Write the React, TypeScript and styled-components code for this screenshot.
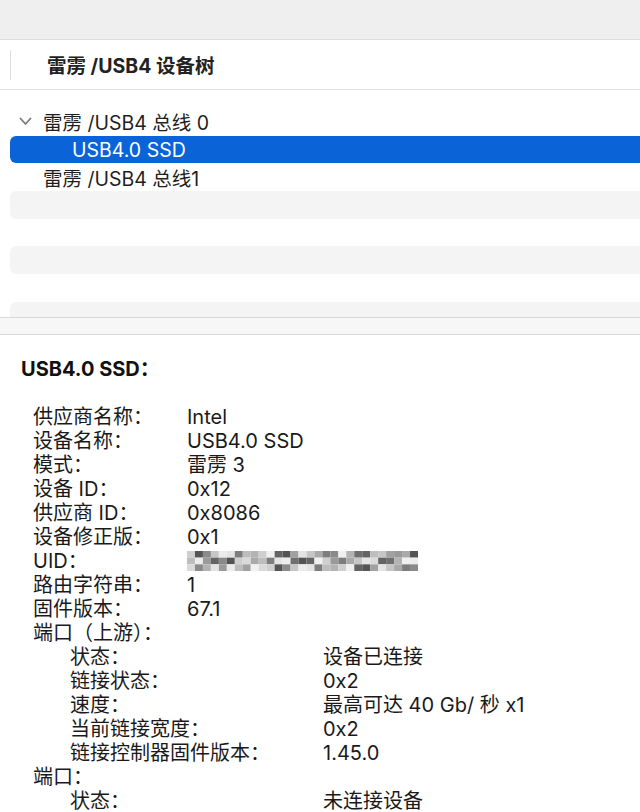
import React from 'react';
import styled, { createGlobalStyle } from 'styled-components';

const GlobalStyle = createGlobalStyle`
  html, body {
    margin: 0;
    padding: 0;
    background: #ffffff;
  }
  body {
    font-family: "Inter", "Noto Sans CJK SC", sans-serif;
    color: #1d1d1f;
    -webkit-font-smoothing: antialiased;
  }
`;

const Page = styled.div`
  width: 640px;
  height: 812px;
  overflow: hidden;
  display: flex;
  flex-direction: column;
`;

const Toolbar = styled.div`
  height: 39px;
  flex-shrink: 0;
  background: #efefef;
  border-bottom: 1px solid #dcdcdc;
`;

const ColumnHeader = styled.div`
  height: 49px;
  flex-shrink: 0;
  display: flex;
  align-items: center;
  border-bottom: 1px solid #e2e2e2;
`;

const HeaderTick = styled.div`
  width: 1px;
  height: 30px;
  margin-left: 10px;
  background: #dedede;
`;

const HeaderTitle = styled.div`
  margin-left: 36px;
  font-size: 19.5px;
  font-weight: 700;
  color: #222;
`;

const Tree = styled.div`
  height: 227px;
  flex-shrink: 0;
  overflow: hidden;
  padding: 18px 0 0 10px;
  box-sizing: border-box;
`;

const TreeRow = styled.div<{ $striped?: boolean; $selected?: boolean; $indent: number }>`
  height: 27.7px;
  display: flex;
  align-items: center;
  padding-left: ${(p) => p.$indent}px;
  border-radius: 6px 0 0 6px;
  font-size: 19.5px;
  color: ${(p) => (p.$selected ? '#ffffff' : '#1f1f1f')};
  background: ${(p) => (p.$selected ? '#0b63d8' : p.$striped ? '#f4f4f4' : 'transparent')};
  white-space: nowrap;
`;

const Chevron = styled.svg`
  width: 13px;
  height: 9px;
  margin-left: 9px;
  margin-right: 11px;
`;

const Splitter = styled.div`
  height: 16px;
  flex-shrink: 0;
  background: #f7f7f7;
  border-top: 1px solid #d9d9d9;
  border-bottom: 1px solid #d9d9d9;
`;

const Detail = styled.div`
  flex: 1;
  padding: 22px 0 0 21px;
`;

const DetailTitle = styled.div`
  font-size: 20px;
  font-weight: 700;
  line-height: 24px;
  margin-bottom: 24px;
  color: #111;
`;

const InfoList = styled.div`
  padding-left: 12px;
`;

const InfoRow = styled.div<{ $nested?: boolean }>`
  display: grid;
  grid-template-columns: ${(p) => (p.$nested ? '253px' : '154px')} 1fr;
  padding-left: ${(p) => (p.$nested ? 37 : 0)}px;
  height: 24px;
  line-height: 24px;
  font-size: 20px;
  color: #1a1a1a;
  white-space: nowrap;
`;

const Mosaic = styled.svg`
  display: block;
  margin-top: 2px;
`;

const mosaicShades = [
  '#cfcfcf', '#a9a9a9', '#8a8a8a', '#e4e4e4', '#6f6f6f', '#bdbdbd', '#f0f0f0', '#9a9a9a',
  '#545454', '#c6c6c6', '#dadada', '#7d7d7d', '#b3b3b3', '#ececec', '#646464', '#a1a1a1',
];

const BlurredUid: React.FC = () => {
  const cols = 29;
  const rows = 3;
  const cells = [];
  for (let r = 0; r < rows; r++) {
    for (let c = 0; c < cols; c++) {
      const shade = mosaicShades[(c * 7 + r * 5 + ((c * c) % 5)) % mosaicShades.length];
      cells.push(<rect key={`${r}-${c}`} x={c * 8} y={r * 7} width={8} height={7} fill={shade} />);
    }
  }
  return (
    <Mosaic width={231} height={20} viewBox="0 0 232 21" preserveAspectRatio="none">
      {cells}
    </Mosaic>
  );
};

type Info = { label: string; value?: string; nested?: boolean; blurred?: boolean };

const info: Info[] = [
  { label: '供应商名称：', value: 'Intel' },
  { label: '设备名称：', value: 'USB4.0 SSD' },
  { label: '模式：', value: '雷雳 3' },
  { label: '设备 ID：', value: '0x12' },
  { label: '供应商 ID：', value: '0x8086' },
  { label: '设备修正版：', value: '0x1' },
  { label: 'UID：', blurred: true },
  { label: '路由字符串：', value: '1' },
  { label: '固件版本：', value: '67.1' },
  { label: '端口（上游）：' },
  { label: '状态：', value: '设备已连接', nested: true },
  { label: '链接状态：', value: '0x2', nested: true },
  { label: '速度：', value: '最高可达 40 Gb/ 秒 x1', nested: true },
  { label: '当前链接宽度：', value: '0x2', nested: true },
  { label: '链接控制器固件版本：', value: '1.45.0', nested: true },
  { label: '端口：' },
  { label: '状态：', value: '未连接设备', nested: true },
];

const treeRows = [
  { text: '雷雳 /USB4 总线 0', indent: 0, chevron: true },
  { text: 'USB4.0 SSD', indent: 62, selected: true },
  { text: '雷雳 /USB4 总线1', indent: 33 },
  { text: '' },
  { text: '' },
  { text: '' },
  { text: '' },
  { text: '' },
  { text: '' },
];

export default function App() {
  return (
    <>
      <GlobalStyle />
      <Page>
        <Toolbar />
        <ColumnHeader>
          <HeaderTick />
          <HeaderTitle>雷雳 /USB4 设备树</HeaderTitle>
        </ColumnHeader>
        <Tree>
          {treeRows.map((row, i) => (
            <TreeRow
              key={i}
              $indent={row.indent ?? 0}
              $selected={row.selected}
              $striped={i % 2 === 1}
            >
              {row.chevron && (
                <Chevron viewBox="0 0 13 9">
                  <path d="M1.5 1.5 L6.5 7 L11.5 1.5" fill="none" stroke="#7a7a7a" strokeWidth="1.8" strokeLinecap="round" strokeLinejoin="round" />
                </Chevron>
              )}
              {row.text}
            </TreeRow>
          ))}
        </Tree>
        <Splitter />
        <Detail>
          <DetailTitle>USB4.0 SSD：</DetailTitle>
          <InfoList>
            {info.map((item, i) => (
              <InfoRow key={i} $nested={item.nested}>
                <span>{item.label}</span>
                {item.blurred ? <BlurredUid /> : <span>{item.value}</span>}
              </InfoRow>
            ))}
          </InfoList>
        </Detail>
      </Page>
    </>
  );
}
